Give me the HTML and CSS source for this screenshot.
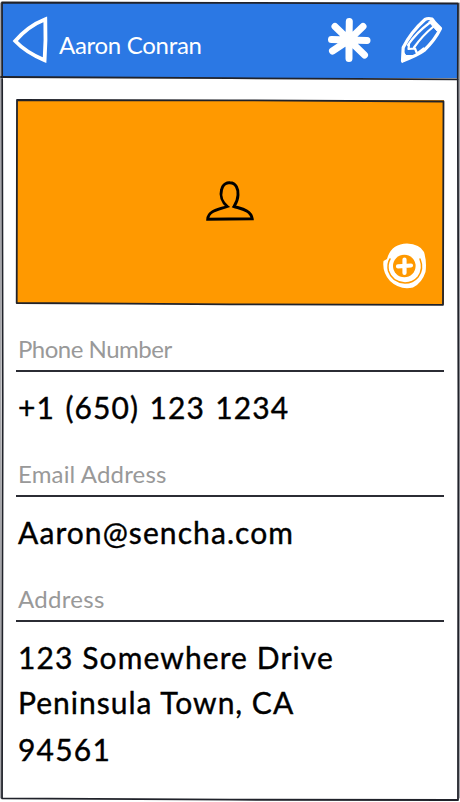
FILE: index.html
```html
<!DOCTYPE html>
<html lang="en">
<head>
<meta charset="utf-8">
<title>Aaron Conran</title>
<link rel="stylesheet" href="styles.css">
</head>
<body>
<main class="screen">
  <header class="bar">
    <svg class="back" viewBox="0 0 38 50"><path d="M33.3 4.2Q16 11 3.2 26Q14 37.500 32.600 45.200Q34 25 33.300 4.200Z"/></svg>
    <h1 class="title">Aaron Conran</h1>
    <svg class="star" viewBox="0 0 48 48"><path d="M23.300 5.500L23 24V42.500M23 24L5.500 23.500M23 24L41 24.500M23 24L9 10.500M23 24L37 10.500M23 24L6.500 35M23 24L38.500 39"/></svg>
    <svg class="pencil" viewBox="0 0 50 54"><path class="body" d="M6.500 49L7.200 35.500Q15 20 29 7.500Q32 5.800 36 7L39 11L44.500 16.500Q39 28 28 38.500Q22 43 6.500 49Z"/><path class="wood" d="M36.500 7.500L44.500 16L41 19L33 10Z"/><path class="thin" d="M12 33Q20 21 34 10.500M18 35.500Q26 24 37.500 14.500M13 32.500L12.500 37L19 36.500L21 41.500L27.500 36.500"/><path class="wood" d="M6 50L7.500 40L10 43.500L17 43.500Z"/></svg>
  </header>
  <section class="content">
    <div class="photo">
      <svg class="person" viewBox="0 0 50 42"><path d="M22.300 26.500C17 22 15 15.500 16.500 10C18 3 23 2.500 25 2.800C31 3 33.500 9 33 15C32.800 20 31 23.500 29 26.500C35 28.500 46 29.500 47.200 38.800L24 39L2.700 39.300C3 30.500 14 29.500 22.300 26.500Z"/></svg>
      <svg class="add" viewBox="0 0 46 48"><path class="disc" d="M5 17Q9 2 25 1.500Q38 2 42 10Q45 20 43.500 30Q40 41 31 45.500Q18 48.500 8 39Q0 30 1.500 19Z"/><path class="ring" d="M38 17Q42 27 36 35Q31 41 23 41Q10 40 6.500 29Q5 22 8 17"/><circle class="inner" cx="22.300" cy="24" r="11.300"/><path class="plus" d="M22.500 17.500V31M16 24.300L29 23.500"/></svg>
      <svg class="outline" viewBox="0 0 430 207" preserveAspectRatio="none"><path d="M2 1L214 1.300L428.500 2.500L428 205.800L215 205.300L110 204.700L1.700 204Z"/></svg>
    </div>
    <dl class="fields">
      <div class="field"><dt class="label phone-label">Phone Number</dt><dd class="value"><span class="line phone">+1 (650) 123 1234</span></dd></div>
      <div class="field"><dt class="label email-label">Email Address</dt><dd class="value"><span class="line email">Aaron@sencha.com</span></dd></div>
      <div class="field"><dt class="label address-label">Address</dt><dd class="value"><span class="line street">123 Somewhere Drive</span><span class="line town">Peninsula Town, CA</span><span class="line zip">94561</span></dd></div>
    </dl>
  </section>
  <svg class="outline" viewBox="0 0 460 802"><path class="edge" d="M.5 3V798M459.500 3V798"/><path d="M2 2.500L230 2.800L458 3.500L457.800 79L458.400 400L458 800L230 799.700L2 798.300L2.700 400L2 2.500M1 77L230 78.200L458 79.300"/></svg>
</main>
</body>
</html>
```
FILE: styles.css
```css
* { box-sizing: border-box; margin: 0; padding: 0; }
body { background: #fff; font-family: Lato, "Open Sans", sans-serif; }
svg { display: block; fill: none; stroke-linecap: round; stroke-linejoin: round; }
.screen { position: relative; width: 460px; height: 802px; overflow: hidden; padding: 3px 2px 0; }
.bar { display: flex; height: 75px; padding-left: 10px; background: #2b78e4; color: #fff; }
.back { width: 38px; height: 50px; margin-top: 12px; stroke: #fff; stroke-width: 3.8; stroke-linejoin: miter; }
.title { width: 246px; margin: 27px 0 0 9px; font-size: 24px; line-height: 30px; font-weight: 400; white-space: nowrap; letter-spacing: -.3px; }
.star { flex: none; width: 48px; height: 48px; margin: 13px 0 0 21px; stroke: #fff; stroke-width: 7; }
.pencil { flex: none; width: 50px; height: 54px; margin: 9px 0 0 22px; stroke: #fff; }
.pencil .body { stroke-width: 3.200; }
.pencil .thin { stroke-width: 2.2; }
.pencil .wood { fill: #fff; stroke-width: 1; }
.content { padding: 21px 13px 0; }
.photo { position: relative; width: 430px; height: 207px; padding: 1px 1px 2px 2px; background: #ff9900 content-box; }
.person { width: 50px; height: 42px; margin: 80px 0 0 188px; stroke: #000; stroke-width: 2.9; stroke-linejoin: miter; }
.add { position: absolute; left: 367px; top: 143px; width: 46px; height: 48px; }
.disc { fill: #fff; }
.ring { stroke: #f90; stroke-width: 1.5; }
.inner { fill: #f90; }
.plus { stroke: #fff; stroke-width: 4.200; }
.outline { position: absolute; left: 0; top: 0; width: 100%; height: 100%; stroke: #20222a; stroke-width: 1.8; pointer-events: none; }
.edge { stroke: #a5a5aa; stroke-width: 1; }
.fields { padding-top: 28px; }
.field { height: 125px; }
.label { width: 428px; height: 38px; margin-left: 1px; padding-left: 2px; border-bottom: 2px solid #2b2c34; color: #999; font-size: 24px; line-height: 30px; white-space: nowrap; }
.phone-label { letter-spacing: -.5px; }
.email-label { letter-spacing: .15px; }
.address-label { letter-spacing: .3px; }
.value { padding: 12px 0 0 3px; color: #000; font-size: 30px; }
.line { display: block; height: 46px; line-height: 46px; white-space: nowrap; -webkit-text-stroke: .4px #000; }
.phone { letter-spacing: 1.1px; word-spacing: 1.6px; }
.email { letter-spacing: 1.080px; }
.street { letter-spacing: 1.1px; }
.town { letter-spacing: 1px; line-height: 45px; }
.zip { letter-spacing: 1.200px; }
```
